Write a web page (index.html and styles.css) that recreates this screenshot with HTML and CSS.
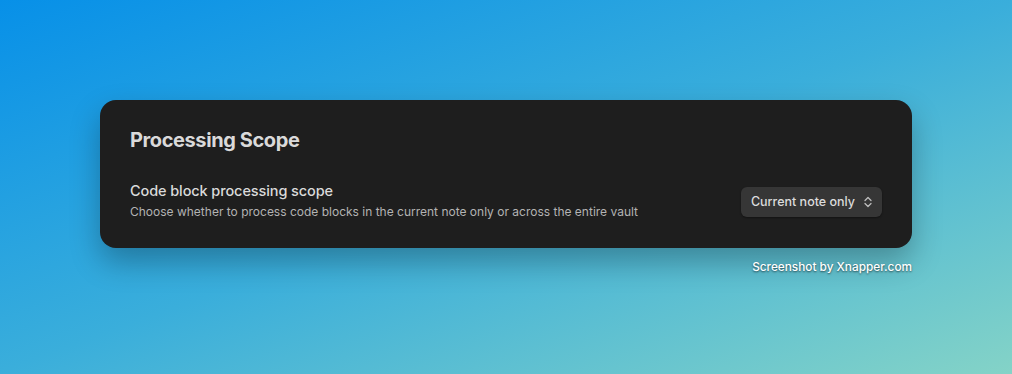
FILE: index.html
```html
<!DOCTYPE html>
<html lang="en">
<head>
    <meta charset="UTF-8">
    <meta name="viewport" content="width=device-width, initial-scale=1.0">
    <title>Processing Scope</title>
    <link rel="stylesheet" href="styles.css">
</head>
<body>
    <div class="frame">
        <div class="card">
            <h1>Processing Scope</h1>
            <div class="setting">
                <div class="setting-info">
                    <div class="setting-name">Code block processing scope</div>
                    <div class="setting-desc">Choose whether to process code blocks in the current note only or across the entire vault</div>
                </div>
                <div class="dropdown">
                    <span>Current note only</span>
                    <svg width="8" height="12" viewBox="0 0 8 12" fill="none" stroke="#bdbdbd" stroke-width="1.3" stroke-linecap="round" stroke-linejoin="round">
                        <path d="M1 4.5 L4 1.5 L7 4.5"/>
                        <path d="M1 7.5 L4 10.5 L7 7.5"/>
                    </svg>
                </div>
            </div>
        </div>
        <div class="watermark">Screenshot by Xnapper.com</div>
    </div>
</body>
</html>
```

FILE: styles.css
```css
html, body {
    margin: 0;
    height: 100%;
}
body {
    font-family: Inter, "Noto Sans", sans-serif;
    background: linear-gradient(160deg, #0790e8 0%, #3aaedb 50%, #84d3c7 100%);
    overflow: hidden;
}
.frame {
    width: 812px;
    margin: 0 auto;
    padding-top: 100px;
}
.card {
    background-color: #1e1e1e;
    border-radius: 16px;
    padding: 27px 30px 32px;
    box-shadow: 0 14px 30px rgba(0,0,0,0.28);
    box-sizing: border-box;
    height: 148px;
}
h1 {
    margin: 0;
    font-size: 20px;
    font-weight: 700;
    color: #dadada;
    letter-spacing: -0.4px;
    line-height: 26px;
}
.setting {
    display: flex;
    align-items: center;
    justify-content: space-between;
    margin-top: 28px;
}
.setting-name {
    font-size: 14.5px;
    font-weight: 500;
    color: #dadada;
    line-height: 20px;
    letter-spacing: -0.1px;
}
.setting-desc {
    font-size: 12px;
    color: #b3b3b3;
    margin-top: 3px;
    line-height: 16px;
}
.dropdown {
    display: flex;
    align-items: center;
    gap: 9px;
    background-color: #363636;
    border-radius: 6px;
    padding: 0 10px;
    height: 30px;
    font-size: 12.5px;
    font-weight: 500;
    color: #dcdcdc;
    box-shadow: 0 1px 2px rgba(0,0,0,0.4);
    margin-top: 2px;
}
.watermark {
    text-align: right;
    color: #ffffff;
    font-size: 11.8px;
    font-weight: 500;
    margin-top: 12px;
    text-shadow: 0 1px 2px rgba(0,0,0,0.6);
}
```
